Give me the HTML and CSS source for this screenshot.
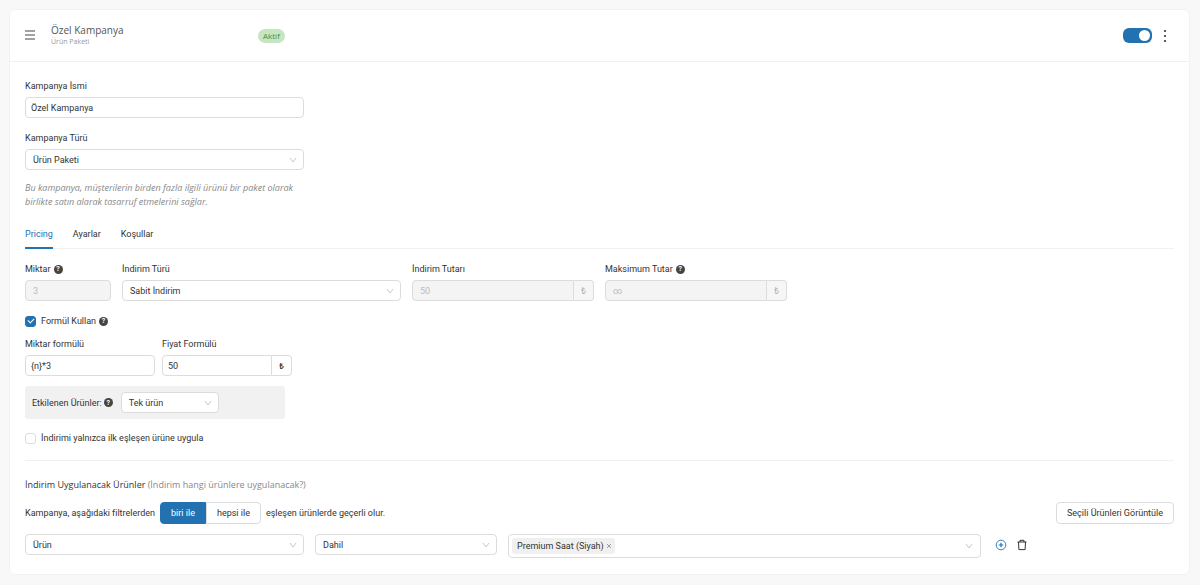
FILE: index.html
```html
<!DOCTYPE html>
<html lang="tr">
<head>
    <meta charset="UTF-8">
    <meta name="viewport" content="width=device-width, initial-scale=1.0">
    <title>Özel Kampanya</title>
    <link rel="stylesheet" href="styles.css">
</head>
<body>
    <main class="card">
        <header class="card-header">
            <button type="button" class="icon-button menu" aria-label="Sırala">
                <svg width="10" height="12" viewBox="0 0 10 12" fill="none" stroke="#444" stroke-width="1.2"><path d="M0 1h10M0 5h10M0 9h10"/></svg>
            </button>
            <div class="title">
                <h1>Özel Kampanya</h1>
                <p>Ürün Paketi</p>
            </div>
            <span class="badge">Aktif</span>
            <div class="header-actions">
                <input type="checkbox" class="switch" aria-label="Kampanya aktif" checked>
                <button type="button" class="icon-button" aria-label="Seçenekler">
                    <svg width="4" height="14" viewBox="0 0 4 14" fill="#333"><circle cx="2" cy="2" r="1.1"/><circle cx="2" cy="7" r="1.1"/><circle cx="2" cy="12" r="1.1"/></svg>
                </button>
            </div>
        </header>

        <form class="card-body">
            <div class="field wide">
                <label for="name">Kampanya İsmi</label>
                <input type="text" class="control" id="name" value="Özel Kampanya">
            </div>
            <div class="field wide">
                <label for="type">Kampanya Türü</label>
                <div class="select">
                    <select class="control" id="type"><option>Ürün Paketi</option></select>
                    <svg class="chevron" viewBox="0 0 8 6"><path d="M1 1l3 4 3-4"/></svg>
                </div>
            </div>
            <p class="description">Bu kampanya, müşterilerin birden fazla ilgili ürünü bir paket olarak birlikte satın alarak tasarruf etmelerini sağlar.</p>

            <div class="tabs" role="tablist">
                <button type="button" class="tab active" role="tab" aria-selected="true">Pricing</button>
                <button type="button" class="tab" role="tab" aria-selected="false">Ayarlar</button>
                <button type="button" class="tab" role="tab" aria-selected="false">Koşullar</button>
            </div>

            <div class="row">
                <div class="field amount">
                    <label for="amount">Miktar <span class="help">?</span></label>
                    <input type="text" class="control" id="amount" value="3" disabled>
                </div>
                <div class="field wide">
                    <label for="discount-type">İndirim Türü</label>
                    <div class="select">
                        <select class="control" id="discount-type"><option>Sabit İndirim</option></select>
                        <svg class="chevron" viewBox="0 0 8 6"><path d="M1 1l3 4 3-4"/></svg>
                    </div>
                </div>
                <div class="field price">
                    <label for="discount">İndirim Tutarı</label>
                    <div class="input-group">
                        <input type="text" class="control" id="discount" value="50" disabled>
                        <span class="addon disabled">₺</span>
                    </div>
                </div>
                <div class="field price">
                    <label for="max">Maksimum Tutar <span class="help">?</span></label>
                    <div class="input-group">
                        <input type="text" class="control" id="max" value="∞" disabled>
                        <span class="addon disabled">₺</span>
                    </div>
                </div>
            </div>

            <label class="check use-formula"><input type="checkbox" checked> Formül Kullan <span class="help">?</span></label>

            <div class="row formulas">
                <div class="field formula">
                    <label for="amount-formula">Miktar formülü</label>
                    <input type="text" class="control" id="amount-formula" value="{n}*3">
                </div>
                <div class="field formula">
                    <label for="price-formula">Fiyat Formülü</label>
                    <div class="input-group">
                        <input type="text" class="control" id="price-formula" value="50">
                        <span class="addon">₺</span>
                    </div>
                </div>
            </div>

            <div class="affected">
                <label for="affected">Etkilenen Ürünler: <span class="help">?</span></label>
                <div class="select">
                    <select class="control" id="affected"><option>Tek ürün</option></select>
                    <svg class="chevron" viewBox="0 0 8 6"><path d="M1 1l3 4 3-4"/></svg>
                </div>
            </div>

            <label class="check"><input type="checkbox"> İndirimi yalnızca ilk eşleşen ürüne uygula</label>

            <section class="products">
                <h2>İndirim Uygulanacak Ürünler <span>(İndirim hangi ürünlere uygulanacak?)</span></h2>
                <div class="match">
                    <span>Kampanya, aşağıdaki filtrelerden</span>
                    <div class="button-group">
                        <button type="button" class="active">biri ile</button>
                        <button type="button">hepsi ile</button>
                    </div>
                    <span>eşleşen ürünlerde geçerli olur.</span>
                    <button type="button" class="button">Seçili Ürünleri Görüntüle</button>
                </div>
                <div class="filter">
                    <div class="select wide">
                        <select class="control" aria-label="Filtre"><option>Ürün</option></select>
                        <svg class="chevron" viewBox="0 0 8 6"><path d="M1 1l3 4 3-4"/></svg>
                    </div>
                    <div class="select price">
                        <select class="control" aria-label="Koşul"><option>Dahil</option></select>
                        <svg class="chevron" viewBox="0 0 8 6"><path d="M1 1l3 4 3-4"/></svg>
                    </div>
                    <div class="select multi">
                        <span class="tag">Premium Saat (Siyah)
                            <button type="button" class="icon-button" aria-label="Kaldır"><svg width="6" height="6" viewBox="0 0 6 6" stroke="#888" stroke-width="0.8"><path d="M1 1l4 4M5 1L1 5"/></svg></button>
                        </span>
                        <input type="text" aria-label="Ürün ara">
                        <svg class="chevron" viewBox="0 0 8 6"><path d="M1 1l3 4 3-4"/></svg>
                    </div>
                    <div class="filter-actions">
                        <button type="button" class="icon-button" aria-label="Ekle">
                            <svg width="12" height="12" viewBox="0 0 12 12" fill="none" stroke="#2271b1"><circle cx="6" cy="6" r="4.8" stroke-width="0.9"/><path d="M6 3.7v4.6M3.7 6h4.6" stroke-width="1.2"/></svg>
                        </button>
                        <button type="button" class="icon-button" aria-label="Sil">
                            <svg width="10" height="12" viewBox="0 0 10 12" fill="none" stroke="#333"><path d="M0.5 3h9M3 3V1.3h4V3M1.5 3l.4 7.6h6.2L8.5 3"/></svg>
                        </button>
                    </div>
                </div>
            </section>
        </form>
    </main>
</body>
</html>
```
FILE: styles.css
```css
* {
    box-sizing: border-box;
}

body {
    margin: 0;
    padding: 9px 10px 9px 9px;
    background-color: #f8f8f8;
    color: #333;
    font-family: Roboto, "Noto Sans", sans-serif;
    font-size: 9px;
    line-height: 14px;
}

h1, h2, p {
    margin: 0;
    font-weight: 400;
}

input, select, button {
    margin: 0;
    font: inherit;
    color: inherit;
}

button {
    cursor: pointer;
}

.card {
    background-color: #fff;
    border: 1px solid #f2f2f2;
    border-radius: 6px;
}

.card-header, .description, .addon, h2 {
    font-family: "Open Sans", "Noto Sans", sans-serif;
}

/* Header */
.card-header {
    display: flex;
    align-items: center;
    height: 52px;
    padding: 0 22px 0 15px;
    border-bottom: 1px solid #f0f0f0;
}

.icon-button {
    display: flex;
    padding: 0;
    border: none;
    background: none;
}

.menu {
    margin-right: 16px;
}

.title {
    width: 207px;
}

h1 {
    font-size: 10px;
    line-height: 13px;
    color: #555;
}

.title p {
    font-size: 7px;
    line-height: 10px;
    color: #999;
}

.badge {
    padding: 0 5px;
    border-radius: 7px;
    background-color: #c6e6c1;
    color: #4b8a3f;
    font-size: 8px;
}

.header-actions {
    display: flex;
    align-items: center;
    gap: 11px;
    margin-left: auto;
}

.switch {
    appearance: none;
    display: flex;
    width: 29px;
    height: 15px;
    padding: 2px;
    border-radius: 6px;
    background-color: #bbb;
}

.switch::before {
    content: "";
    width: 11px;
    height: 11px;
    border-radius: 50%;
    background-color: #fff;
}

.switch:checked {
    justify-content: flex-end;
    background-color: #2271b1;
}

/* Form */
.card-body {
    padding: 17px 15px 16px;
}

.field label {
    display: flex;
    align-items: center;
    gap: 3px;
    margin-bottom: 4px;
}

.wide {
    width: 279px;
}

.wide + .wide {
    margin-top: 13px;
}

.control {
    display: block;
    width: 100%;
    height: 21px;
    padding: 0 5px;
    border: 1px solid #dcdcdc;
    border-radius: 4px;
    background-color: #fff;
}

.control:disabled {
    padding: 0 7px;
    background-color: #f4f4f4;
    color: #bbb;
}

.select {
    position: relative;
}

select.control {
    appearance: none;
    padding: 0 20px 0 7px;
}

.chevron {
    position: absolute;
    top: 8px;
    right: 7px;
    width: 8px;
    height: 6px;
    fill: none;
    stroke: #bbb;
    stroke-width: 0.8;
    pointer-events: none;
}

.help {
    display: inline-flex;
    align-items: center;
    justify-content: center;
    width: 9px;
    height: 9px;
    border-radius: 50%;
    background-color: #444;
    color: #fff;
    font-size: 7px;
    font-weight: 700;
}

.description {
    width: 279px;
    margin-top: 11px;
    color: #888;
    font-style: italic;
}

/* Tabs */
.tabs {
    display: flex;
    gap: 20px;
    margin: 18px 0 13px;
    border-bottom: 1px solid #f0f0f0;
}

.tab {
    margin-bottom: -1px;
    padding: 0 0 6px;
    border: none;
    border-bottom: 2px solid transparent;
    background: none;
}

.tab.active {
    border-color: #2271b1;
    color: #2271b1;
}

.row {
    display: flex;
    gap: 11px;
}

.row .wide {
    margin-top: 0;
}

.amount {
    width: 86px;
}

.price {
    width: 182px;
}

.input-group {
    display: flex;
}

.input-group .control {
    flex: 1;
    min-width: 0;
    border-radius: 4px 0 0 4px;
}

.addon {
    display: flex;
    align-items: center;
    justify-content: center;
    width: 20px;
    border: 1px solid #dcdcdc;
    border-left: none;
    border-radius: 0 4px 4px 0;
    font-size: 8px;
    font-weight: 600;
}

.addon.disabled {
    background-color: #f6f6f6;
    color: #aaa;
    font-weight: 400;
}

.check {
    display: flex;
    align-items: center;
    gap: 5px;
}

.check .help {
    margin-left: -2px;
}

.check input {
    appearance: none;
    display: flex;
    align-items: center;
    justify-content: center;
    width: 11px;
    height: 11px;
    border: 1px solid #dcdcdc;
    border-radius: 3px;
    background-color: #fff;
}

.check input:checked {
    border-color: #2271b1;
    background-color: #2271b1;
}

.check input:checked::before {
    content: "";
    width: 3px;
    height: 5px;
    margin-bottom: 2px;
    border: solid #fff;
    border-width: 0 1px 1px 0;
    transform: rotate(45deg);
}

.use-formula {
    margin: 13px 0 9px;
}

.formulas {
    gap: 7px;
}

.formula {
    width: 130px;
}

.affected {
    display: flex;
    align-items: center;
    gap: 8px;
    width: 260px;
    margin: 10px 0 12px;
    padding: 6px 7px;
    border-radius: 3px;
    background-color: #f1f1f1;
}

.affected label {
    display: flex;
    align-items: center;
    gap: 2px;
}

.affected .select {
    width: 98px;
}

/* Products */
.products {
    margin-top: 15px;
    padding-top: 17px;
    border-top: 1px solid #f0f0f0;
}

h2 {
    font-size: 9px;
    font-weight: 500;
}

h2 span {
    color: #888;
    font-weight: 400;
}

.match {
    display: flex;
    align-items: center;
    gap: 5px;
    margin: 10px 0;
}

.button-group {
    display: flex;
}

.button-group button,
.button {
    height: 22px;
    padding: 0 10px;
    border: 1px solid #dcdcdc;
    background-color: #fff;
}

.button-group button {
    border-radius: 0 4px 4px 0;
}

.button-group .active {
    border-color: #2271b1;
    border-radius: 4px 0 0 4px;
    background-color: #2271b1;
    color: #fff;
}

.button {
    margin-left: auto;
    border-radius: 4px;
}

.filter {
    display: flex;
    align-items: flex-start;
    gap: 11px;
}

.multi {
    display: flex;
    flex: 1;
    align-items: center;
    height: 24px;
    padding: 0 3px;
    border: 1px solid #dcdcdc;
    border-radius: 4px;
}

.multi input {
    flex: 1;
    min-width: 0;
    border: none;
    outline: none;
    background: none;
}

.tag {
    display: flex;
    align-items: center;
    gap: 2px;
    height: 16px;
    padding: 0 3px 0 5px;
    border-radius: 3px;
    background-color: #f0f0f0;
}

.filter-actions {
    display: flex;
    align-items: center;
    gap: 10px;
    width: 182px;
    height: 21px;
    padding-left: 3px;
}
```
